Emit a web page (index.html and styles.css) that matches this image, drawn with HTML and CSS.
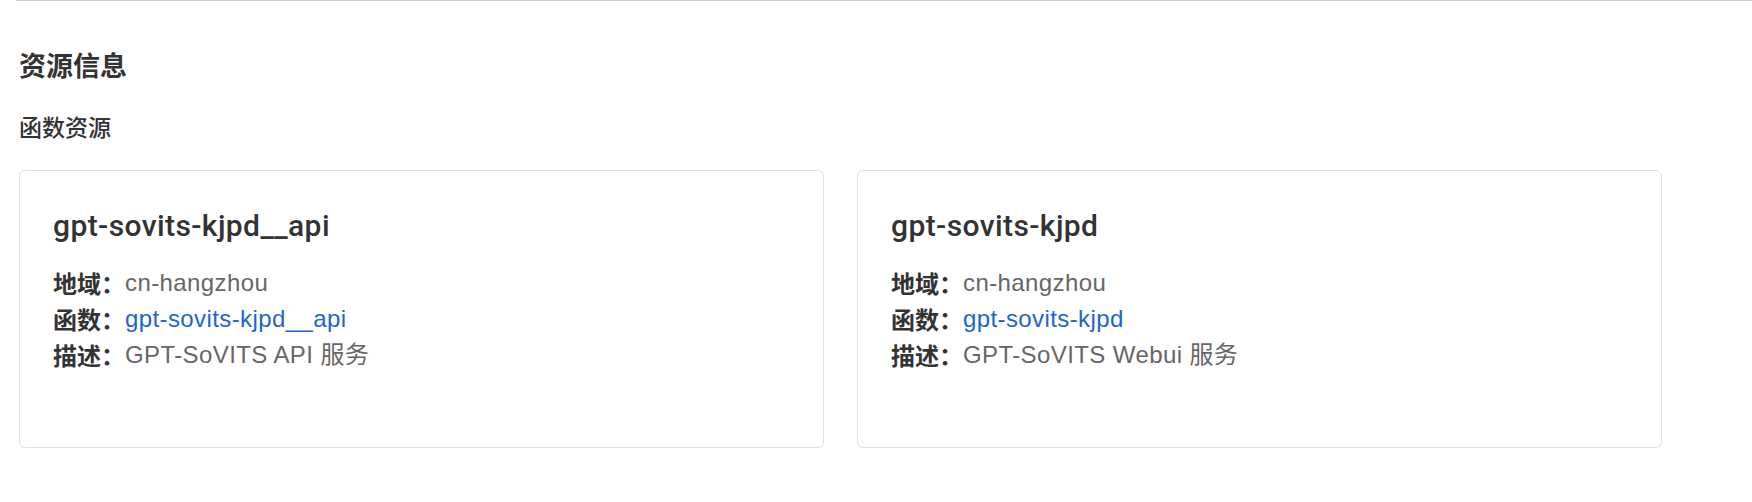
FILE: index.html
```html
<!DOCTYPE html>
<html lang="zh-CN">
<head>
<meta charset="utf-8">
<title>资源信息</title>
<link rel="stylesheet" href="styles.css">
</head>
<body>
<div class="topline"></div>
<main class="page">
  <h2 class="section-title">资源信息</h2>
  <h3 class="sub-title">函数资源</h3>
  <div class="cards">
    <div class="card">
      <div class="card-title">gpt-sovits-kjpd__api</div>
      <div class="row"><span class="label">地域：</span><span class="value">cn-hangzhou</span></div>
      <div class="row"><span class="label">函数：</span><a class="link" href="#">gpt-sovits-kjpd__api</a></div>
      <div class="row"><span class="label">描述：</span><span class="value">GPT-SoVITS API 服务</span></div>
    </div>
    <div class="card">
      <div class="card-title">gpt-sovits-kjpd</div>
      <div class="row"><span class="label">地域：</span><span class="value">cn-hangzhou</span></div>
      <div class="row"><span class="label">函数：</span><a class="link" href="#">gpt-sovits-kjpd</a></div>
      <div class="row"><span class="label">描述：</span><span class="value">GPT-SoVITS Webui 服务</span></div>
    </div>
  </div>
</main>
</body>
</html>
```

FILE: styles.css
```css
* { box-sizing: border-box; }

html, body {
  margin: 0;
  padding: 0;
  background: #ffffff;
}

body {
  font-family: "Liberation Sans", "Noto Sans CJK SC", sans-serif;
  color: #333333;
}

.topline {
  height: 1px;
  margin-left: 16px;
  background: #c9cdd2;
}

.page {
  padding: 44px 0 0 19px;
}

.section-title {
  margin: 0;
  font-family: "Noto Sans CJK SC", sans-serif;
  font-size: 27px;
  line-height: 40px;
  font-weight: 600;
  color: #333333;
}

.sub-title {
  margin: 23px 0 0;
  font-family: "Noto Sans CJK SC", sans-serif;
  font-size: 23px;
  line-height: 36px;
  font-weight: 500;
  color: #333333;
}

.cards {
  margin-top: 26px;
  display: grid;
  grid-template-columns: 805px 805px;
  column-gap: 33px;
}

.card {
  height: 278px;
  border: 1px solid #dfe1e4;
  border-radius: 6px;
  padding: 32px 33px;
}

.card-title {
  font-family: "Roboto", "Liberation Sans", sans-serif;
  font-size: 30px;
  line-height: 45px;
  font-weight: 500;
  letter-spacing: 0.4px;
  color: #333333;
  margin-bottom: 17px;
}

.row {
  display: flex;
  align-items: center;
  height: 36px;
  font-size: 24px;
  line-height: 36px;
  white-space: nowrap;
}

.label {
  font-family: "Noto Sans CJK SC", sans-serif;
  font-weight: 600;
  color: #333333;
}

.value {
  color: #666666;
  letter-spacing: 0.4px;
}

.link {
  color: #2064d4;
  letter-spacing: 0.4px;
  text-decoration: none;
}
```
